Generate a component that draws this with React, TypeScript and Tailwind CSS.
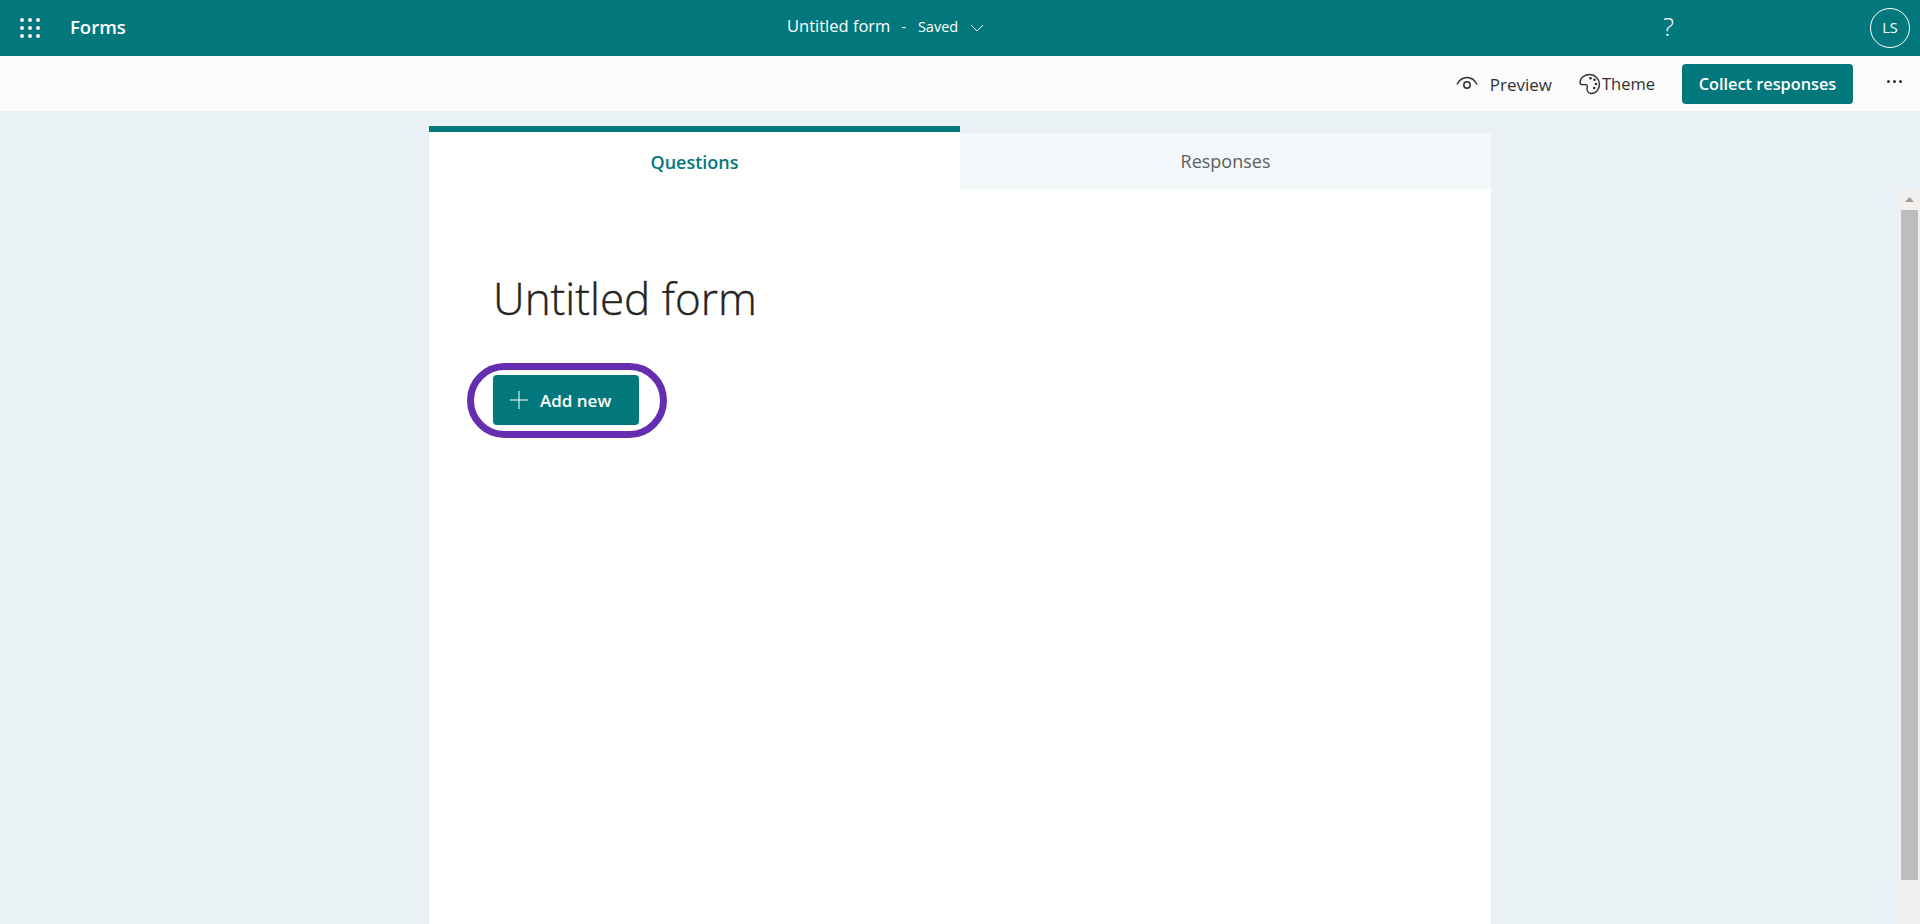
const FONT = "font-['Open_Sans','Noto_Sans',sans-serif]";

function WaffleIcon() {
  const spots = [2, 10, 18];
  return (
    <svg width="20" height="20" viewBox="0 0 20 20" fill="#fff">
      {spots.map((y) => spots.map((x) => <circle key={`${x}-${y}`} cx={x} cy={y} r="2" />))}
    </svg>
  );
}

function EyeIcon() {
  return (
    <svg width="22" height="16" viewBox="0 0 22 16" fill="none" stroke="#323130" strokeWidth="1.5">
      <path d="M1 8.5C3.5 3.5 7 1.5 11 1.5s7.5 2 10 7" />
      <circle cx="11" cy="9" r="3.2" />
    </svg>
  );
}

function PaletteIcon() {
  return (
    <svg width="22" height="22" viewBox="0 0 22 22" fill="none" stroke="#323130" strokeWidth="1.4">
      <path d="M11 1.5C5.5 1.5 1 5 1 9.2c0 1.5 1 2.4 2.5 2.4h3c1.6 0 2.2 1 1.7 2.6-.7 2.4.2 6.3 4 6.3 5 0 8.3-4.6 8.3-9.5S16 1.5 11 1.5z" />
      <g fill="#323130" stroke="none">
        <circle cx="11.5" cy="5.2" r="1.3" />
        <circle cx="15.5" cy="6.8" r="1.3" />
        <circle cx="17" cy="11" r="1.3" />
        <circle cx="15.2" cy="15" r="1.3" />
      </g>
    </svg>
  );
}

function Header() {
  return (
    <header className="h-14 shrink-0 bg-[#03787c] text-white flex items-center relative">
      <div className="w-[70px] pl-5 flex items-center">
        <WaffleIcon />
      </div>
      <span className="text-[18.5px] font-semibold pb-[2px]">Forms</span>
      <div className="absolute left-[787px] top-0 h-14 flex items-center pb-[3px]">
        <span className="text-[16.5px]">Untitled form</span>
        <span className="text-[14px] ml-[11px]">-</span>
        <span className="text-[14.5px] ml-[12px]">Saved</span>
        <svg className="ml-[12px] mt-[3px]" width="14" height="8" viewBox="0 0 14 8" fill="none" stroke="#fff" strokeWidth="1">
          <path d="M1 1l6 6 6-6" />
        </svg>
      </div>
      <div className="ml-auto flex items-center">
        <span className="text-[26px] font-light mr-[196px] pb-1">?</span>
        <div className="w-10 h-10 mr-[10px] rounded-full border border-white flex items-center justify-center text-[14.5px]">
          LS
        </div>
      </div>
    </header>
  );
}

function Toolbar() {
  return (
    <div className="h-[55px] shrink-0 bg-[#fbfbfb] flex items-center justify-end text-[#323130]">
      <EyeIcon />
      <span className="ml-3 text-[17px] pt-[2px]">Preview</span>
      <div className="ml-[27px]">
        <PaletteIcon />
      </div>
      <span className="ml-px text-[16.5px] pt-[2px]">Theme</span>
      <button className="ml-[27px] h-10 w-[171px] rounded bg-[#03787c] text-white font-semibold text-[16.3px] pt-[2px]">
        Collect responses
      </button>
      <div className="ml-[34px] mr-[18px] mb-1 flex gap-[3px]">
        <span className="w-[3px] h-[3px] rounded-full bg-[#323130] block"></span>
        <span className="w-[3px] h-[3px] rounded-full bg-[#323130] block"></span>
        <span className="w-[3px] h-[3px] rounded-full bg-[#323130] block"></span>
      </div>
    </div>
  );
}

function Tabs() {
  return (
    <div className="flex items-start h-[78px] bg-[#e9f1f4]">
      <div className="w-[531px] mt-[15px] h-[63px] bg-white border-t-[6px] border-[#03787c] flex items-center justify-center text-[18px] font-semibold text-[#03787c] pt-[3px]">
        Questions
      </div>
      <div className="flex-1 mt-[22px] h-14 bg-[#f3f8fa] flex items-center justify-center text-[18px] text-[#605e5c]">
        Responses
      </div>
    </div>
  );
}

function Scrollbar() {
  return (
    <div className="w-[21px] mt-[78px] bg-[#f1f0ee] flex flex-col items-center">
      <div className="h-[21px] flex items-center justify-center">
        <svg width="9" height="5" viewBox="0 0 9 5" fill="#a59d95">
          <path d="M4.5 0L9 5H0z" />
        </svg>
      </div>
      <div className="w-[17px] h-[670px] bg-[#bdbdbd]"></div>
    </div>
  );
}

export default function App() {
  return (
    <div className={`h-screen overflow-hidden flex flex-col bg-[#e9f1f4] ${FONT}`}>
      <Header />
      <Toolbar />
      <main className="flex-1 flex min-h-0">
        <div className="w-[429px]"></div>
        <div className="w-[1062px] bg-white flex flex-col">
          <Tabs />
          <div className="pl-[38px] pt-[79px]">
            <h1 className="pl-[26px] text-[44px] leading-[60px] text-[#252423] font-light [-webkit-text-stroke:0.4px_#252423]">Untitled form</h1>
            <div className="mt-[35px] inline-flex border-[7px] border-[#652db0] rounded-full pl-[19px] pr-[21px] pt-[5px] pb-[6px]">
              <button className="w-[146px] h-[50px] rounded bg-[#03787c] text-white flex items-center pl-4">
                <svg width="20" height="20" viewBox="0 0 20 20" stroke="#fff" strokeWidth="1" fill="none">
                  <path d="M10 1v18M1 10h18" />
                </svg>
                <span className="ml-[11px] text-[17px] font-semibold pt-px">Add new</span>
              </button>
            </div>
          </div>
        </div>
        <div className="flex-1 flex justify-end">
          <Scrollbar />
        </div>
      </main>
    </div>
  );
}
